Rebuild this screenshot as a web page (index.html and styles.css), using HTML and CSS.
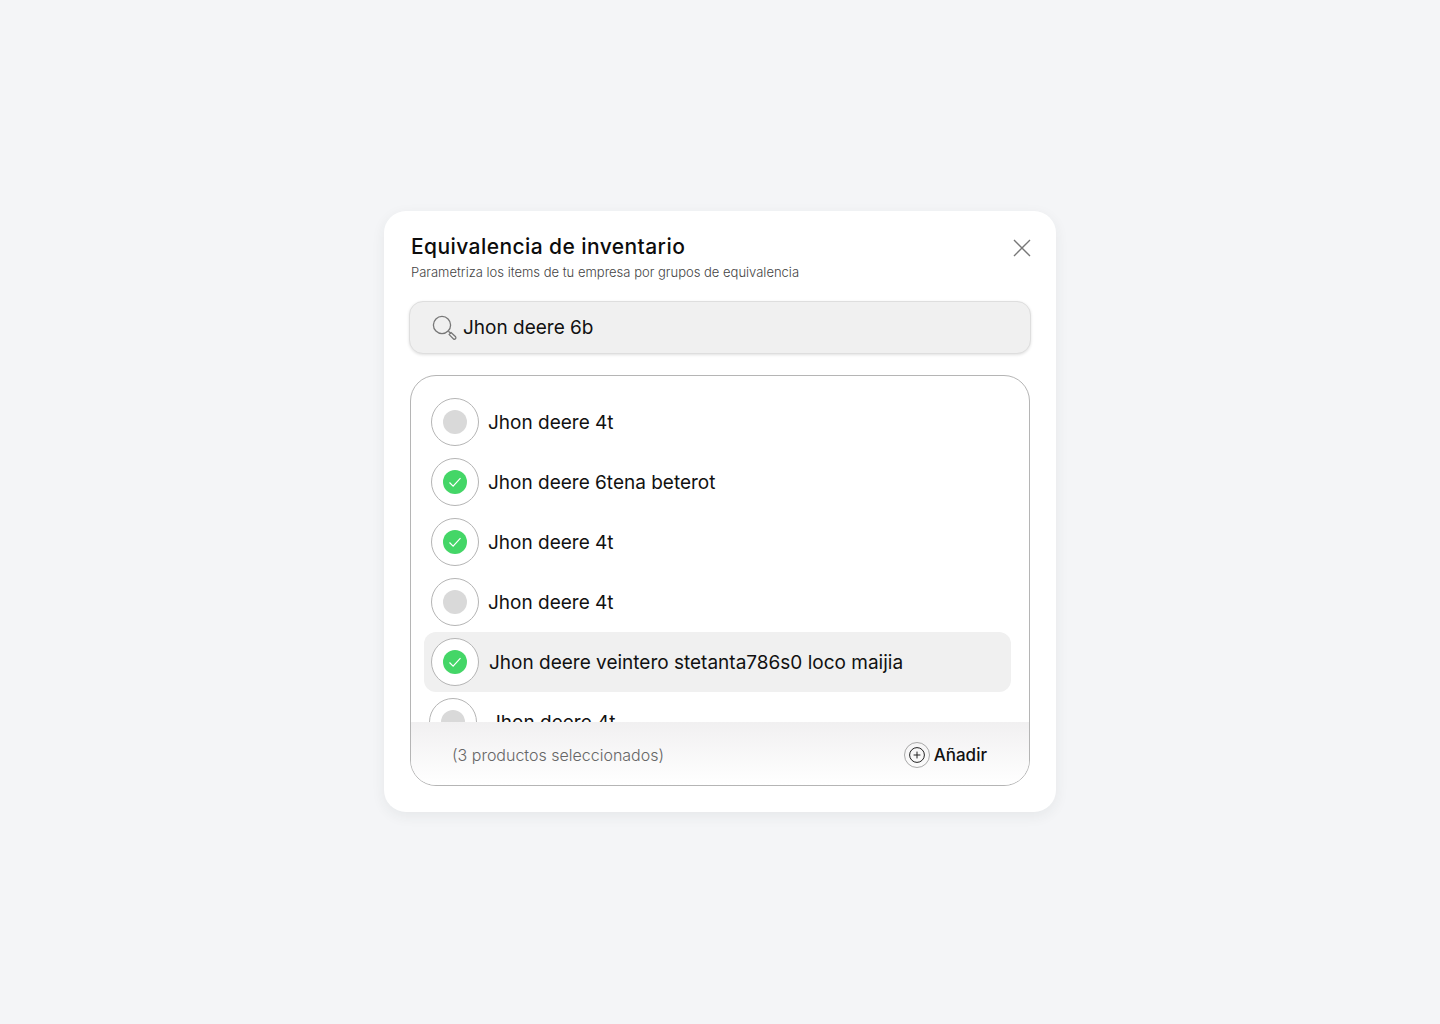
FILE: index.html
```html
<!DOCTYPE html>
<html lang="es">
<head>
<meta charset="utf-8">
<title>Equivalencia de inventario</title>
<link rel="stylesheet" href="styles.css">
</head>
<body>
<main class="card">
  <header class="head">
    <div>
      <h1 class="title">Equivalencia de inventario</h1>
      <p class="sub">Parametriza los items de tu empresa por grupos de equivalencia</p>
    </div>
    <svg class="close" width="18" height="18" viewBox="0 0 18 18" fill="none" stroke="#777" stroke-width="1.4"><path d="M1 1l16 16M17 1L1 17"/></svg>
  </header>
  <div class="search">
    <svg class="search-icon" width="26" height="26" viewBox="0 0 26 26" fill="none" stroke="#777" stroke-width="1.3"><circle cx="10" cy="10" r="8.6"/><path d="M16.4 16.2l2.6 2.4"/><path d="M19 17.6l4.6 4.2a1.5 1.5 0 0 1-2.1 2.1L17.2 19.6z"/></svg>
    <span class="search-text">Jhon deere 6b</span>
  </div>
  <section class="box">
    <div class="list">
      <div class="row"><span class="ring"><span class="dot"></span></span><span class="label">Jhon deere 4t</span></div>
      <div class="row"><span class="ring"><span class="dot on"><svg width="14" height="14" viewBox="0 0 14 14" fill="none" stroke="#fff" stroke-width="1.2"><path d="M1.5 7.5l3.6 3.6 7.4-8"/></svg></span></span><span class="label">Jhon deere 6tena beterot</span></div>
      <div class="row"><span class="ring"><span class="dot on"><svg width="14" height="14" viewBox="0 0 14 14" fill="none" stroke="#fff" stroke-width="1.2"><path d="M1.5 7.5l3.6 3.6 7.4-8"/></svg></span></span><span class="label">Jhon deere 4t</span></div>
      <div class="row"><span class="ring"><span class="dot"></span></span><span class="label">Jhon deere 4t</span></div>
      <div class="row active"><span class="ring"><span class="dot on"><svg width="14" height="14" viewBox="0 0 14 14" fill="none" stroke="#fff" stroke-width="1.2"><path d="M1.5 7.5l3.6 3.6 7.4-8"/></svg></span></span><span class="label">Jhon deere veintero stetanta786s0 loco maijia</span></div>
      <div class="row last"><span class="ring"><span class="dot"></span></span><span class="label">Jhon deere 4t</span></div>
    </div>
    <footer class="foot">
      <span class="count">(3 productos seleccionados)</span>
      <span class="add">
        <span class="add-ring"><svg width="16" height="16" viewBox="0 0 16 16" fill="none" stroke="#222" stroke-width="1"><circle cx="8" cy="8" r="7.4"/><path d="M8 4.6v6.8M4.6 8h6.8"/></svg></span>
        <span class="add-text">Añadir</span>
      </span>
    </footer>
  </section>
</main>
</body>
</html>
```
FILE: styles.css
```css
* { box-sizing: border-box; }
html, body { height: 100%; }
body {
  margin: 0;
  background: #f4f5f7;
  font-family: Inter, "Noto Sans", sans-serif;
  color: #111;
  display: flex;
  align-items: flex-start;
  justify-content: center;
  padding-top: 211px;
}
.card {
  width: 672px;
  height: 601px;
  background: #fff;
  border-radius: 22px;
  padding: 0 25px;
  box-shadow: 0 4px 14px rgba(40, 50, 60, .07);
}
.head {
  height: 90px;
  padding: 22px 0 0 2px;
  display: flex;
  justify-content: space-between;
  align-items: flex-start;
}
.title {
  margin: 0;
  font-size: 21px;
  line-height: 28px;
  font-weight: 500;
  color: #0c0c0c;
  letter-spacing: .02em;
}
.sub {
  margin: 3px 0 0;
  font-size: 13px;
  line-height: 17px;
  font-weight: 300;
  color: #444;
}
.close { margin: 6px 0 0 0; }
.search {
  height: 53px;
  background: #f0f0f0;
  border-radius: 14px;
  border: 1px solid #dedede;
  box-shadow: 0 1px 3px rgba(0, 0, 0, .12);
  display: flex;
  align-items: center;
  padding-left: 22px;
  gap: 5px;
}
.search-icon { flex: none; }
.search-text, .label {
  font-size: 19px;
  font-weight: 400;
  color: #111;
}
.box {
  width: 620px;
  height: 411px;
  margin: 21px 0 0 1px;
  border: 1px solid #b5b5b5;
  border-radius: 26px;
  overflow: hidden;
}
.list {
  height: 346px;
  padding: 16px 18px 0 13px;
  overflow: hidden;
}
.row {
  height: 60px;
  display: flex;
  align-items: center;
  padding-left: 7px;
  gap: 9px;
  border-radius: 12px;
}
.row.active { background: #f0f0f0; gap: 10px; }
.row.last { padding-left: 5px; gap: 13px; }
.ring {
  flex: none;
  width: 48px;
  height: 48px;
  border-radius: 50%;
  border: 1px solid #b5b5b5;
  background: #fff;
  display: flex;
  align-items: center;
  justify-content: center;
}
.dot {
  width: 24px;
  height: 24px;
  border-radius: 50%;
  background: #d9d9d9;
  display: flex;
  align-items: center;
  justify-content: center;
}
.dot.on { background: #44d667; }
.foot {
  height: 63px;
  background: linear-gradient(#f1f0f1, #fff);
  display: flex;
  align-items: center;
  justify-content: space-between;
  padding: 2px 42px 0 41px;
}
.count {
  font-size: 16px;
  font-weight: 300;
  color: #666;
}
.add { display: flex; align-items: center; gap: 4px; }
.add-ring {
  width: 26px;
  height: 26px;
  border-radius: 50%;
  border: 1px solid #a9a9a9;
  display: flex;
  align-items: center;
  justify-content: center;
}
.add-text {
  font-size: 17px;
  font-weight: 500;
  color: #111;
}
```
